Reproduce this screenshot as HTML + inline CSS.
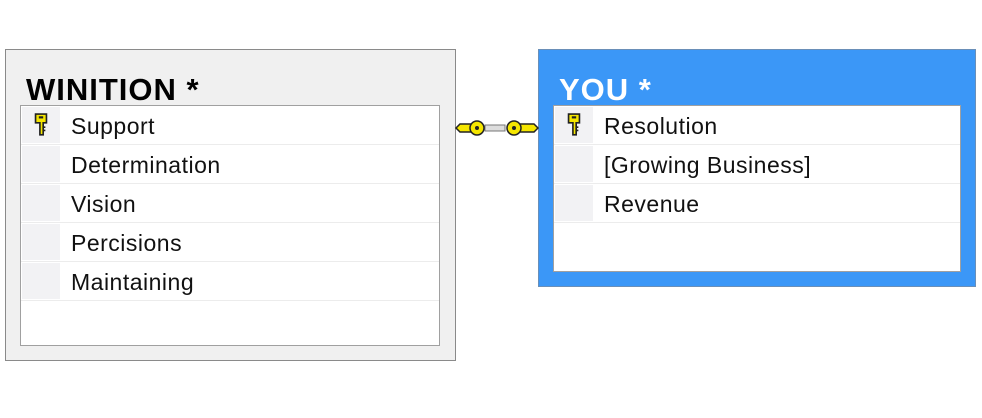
<!DOCTYPE html>
<html><head><style>
body{margin:0;width:982px;height:418px;background:#fff;position:relative;font-family:"Liberation Sans",sans-serif;overflow:hidden}
.box{position:absolute;box-sizing:border-box}
.title{position:absolute;font-weight:bold;font-size:31px;letter-spacing:1px;left:20px;top:22px}
.inner{position:absolute;background:#fff;border:1px solid #a0a0a0;box-sizing:border-box}
.row{height:39px;border-bottom:1px solid #ececec;position:relative;box-sizing:border-box}
.ind{position:absolute;left:1px;top:1px;width:38px;height:36px;background:#f2f2f4}
.txt{position:absolute;left:50px;top:7px;font-size:23px;letter-spacing:0.5px;color:#111}
.key{position:absolute;left:12px;top:7px}
</style></head><body>
<div class="box" style="left:5px;top:49px;width:451px;height:312px;background:#f0f0f0;border:1px solid #8a8a8a">
<div class="title" style="color:#000">WINITION *</div>
<div class="inner" style="left:14px;top:55px;width:420px;height:241px">
<div class="row"><div class="ind"></div><svg class="key" width="16" height="24" viewBox="0 0 14 22"><path d="M2 1h10v8h-3v11h-3v-11h-4z" fill="#f5e600" stroke="#222" stroke-width="1.5"/><rect x="5" y="3" width="4" height="2" fill="#222"/><path d="M9 13h2M9 16h2" stroke="#222" stroke-width="1.5"/></svg><div class="txt">Support</div></div>
<div class="row"><div class="ind"></div><div class="txt">Determination</div></div>
<div class="row"><div class="ind"></div><div class="txt">Vision</div></div>
<div class="row"><div class="ind"></div><div class="txt">Percisions</div></div>
<div class="row"><div class="ind"></div><div class="txt">Maintaining</div></div>
</div></div>
<div class="box" style="left:538px;top:49px;width:438px;height:238px;background:#3b97f7;border:1px solid #6a8fb8">
<div class="title" style="color:#fff">YOU *</div>
<div class="inner" style="left:14px;top:55px;width:408px;height:167px">
<div class="row"><div class="ind"></div><svg class="key" width="16" height="24" viewBox="0 0 14 22"><path d="M2 1h10v8h-3v11h-3v-11h-4z" fill="#f5e600" stroke="#222" stroke-width="1.5"/><rect x="5" y="3" width="4" height="2" fill="#222"/><path d="M9 13h2M9 16h2" stroke="#222" stroke-width="1.5"/></svg><div class="txt">Resolution</div></div>
<div class="row"><div class="ind"></div><div class="txt">[Growing Business]</div></div>
<div class="row"><div class="ind"></div><div class="txt">Revenue</div></div>
</div></div>
<svg style="position:absolute;left:454px;top:117px" width="86" height="22" viewBox="0 0 86 22">
<rect x="31" y="8" width="20" height="6" fill="#ddd" stroke="#777" stroke-width="1"/>
<path d="M2 11l4-4h14v8h-14z" fill="#f5e600" stroke="#222" stroke-width="1.5"/>
<circle cx="23" cy="11" r="7" fill="#f5e600" stroke="#222" stroke-width="1.5"/><circle cx="23" cy="11" r="2" fill="#222"/>
<path d="M84 11l-4-4h-14v8h14z" fill="#f5e600" stroke="#222" stroke-width="1.5"/>
<circle cx="60" cy="11" r="7" fill="#f5e600" stroke="#222" stroke-width="1.5"/><circle cx="60" cy="11" r="2" fill="#222"/>
</svg>
</body></html>
